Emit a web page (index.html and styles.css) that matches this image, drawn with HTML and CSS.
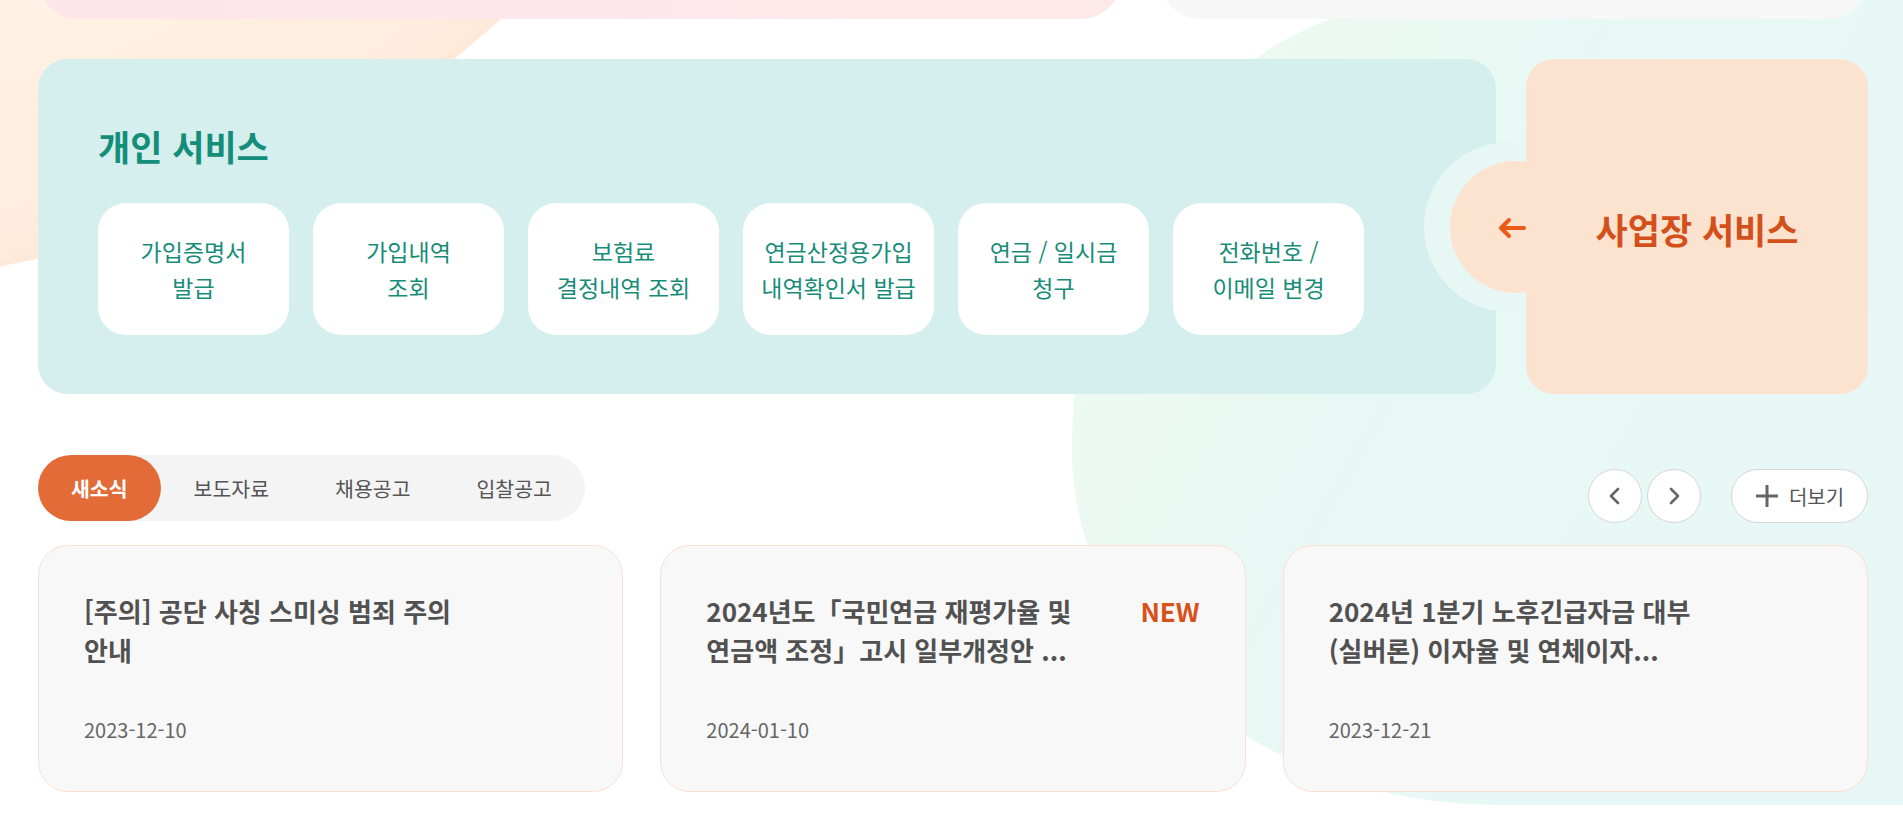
FILE: index.html
```html
<!DOCTYPE html>
<html lang="ko">
<head>
<meta charset="utf-8">
<title>국민연금 서비스</title>
<link rel="stylesheet" href="styles.css">
</head>
<body>
<div class="backdrop">
  <div class="blob-mint"></div>
</div>
<main class="page">
  <div class="top-row">
    <div class="top-card top-card-pink"></div>
    <div class="top-card top-card-gray"></div>
  </div>

  <section class="services">
    <div class="personal">
      <h2 class="personal-title">개인 서비스</h2>
      <ul class="svc-list">
        <li><a class="svc-btn" href="#">가입증명서<br>발급</a></li>
        <li><a class="svc-btn" href="#">가입내역<br>조회</a></li>
        <li><a class="svc-btn" href="#">보험료<br>결정내역 조회</a></li>
        <li><a class="svc-btn" href="#">연금산정용가입<br>내역확인서 발급</a></li>
        <li><a class="svc-btn" href="#">연금 / 일시금<br>청구</a></li>
        <li><a class="svc-btn" href="#">전화번호 /<br>이메일 변경</a></li>
      </ul>
    </div>
    <div class="ring"></div>
    <a class="business" href="#">
      <svg class="business-arrow" width="30" height="22" viewBox="0 0 30 22" aria-hidden="true">
        <path d="M27 11H4M12 3L4 11L12 19" fill="none" stroke="#e85b1a" stroke-width="4" stroke-linecap="round" stroke-linejoin="round"/>
      </svg>
      <span class="business-title">사업장 서비스</span>
    </a>
  </section>

  <section class="news">
    <div class="news-head">
      <div class="tabs">
        <a class="tab tab-active" href="#">새소식</a>
        <a class="tab" href="#">보도자료</a>
        <a class="tab" href="#">채용공고</a>
        <a class="tab" href="#">입찰공고</a>
      </div>
      <div class="controls">
        <button class="circle-btn" type="button" aria-label="이전">
          <svg width="14" height="18" viewBox="0 0 14 18"><path d="M10 2L3 9L10 16" fill="none" stroke="#666" stroke-width="2.6" stroke-linecap="round" stroke-linejoin="round"/></svg>
        </button>
        <button class="circle-btn" type="button" aria-label="다음">
          <svg width="14" height="18" viewBox="0 0 14 18"><path d="M4 2L11 9L4 16" fill="none" stroke="#666" stroke-width="2.6" stroke-linecap="round" stroke-linejoin="round"/></svg>
        </button>
        <a class="more-btn" href="#">
          <svg width="24" height="24" viewBox="0 0 24 24"><path d="M12 1V23M1 12H23" fill="none" stroke="#666" stroke-width="3"/></svg>
          <span>더보기</span>
        </a>
      </div>
    </div>

    <div class="cards">
      <a class="card" href="#">
        <div class="card-top">
          <p class="card-title">[주의] 공단 사칭 스미싱 범죄 주의 안내</p>
        </div>
        <p class="card-date">2023-12-10</p>
      </a>
      <a class="card" href="#">
        <div class="card-top">
          <p class="card-title">2024년도「국민연금 재평가율 및 연금액 조정」고시 일부개정안 ...</p>
          <span class="card-new">NEW</span>
        </div>
        <p class="card-date">2024-01-10</p>
      </a>
      <a class="card" href="#">
        <div class="card-top">
          <p class="card-title">2024년 1분기 노후긴급자금 대부 (실버론) 이자율 및 연체이자...</p>
        </div>
        <p class="card-date">2023-12-21</p>
      </a>
    </div>
  </section>
</main>
</body>
</html>
```

FILE: styles.css
```css
* {
  box-sizing: border-box;
}

html, body {
  margin: 0;
  padding: 0;
}

body {
  position: relative;
  width: 1903px;
  height: 816px;
  overflow: hidden;
  background: #ffffff;
  font-family: "Noto Sans CJK KR", "Noto Sans", sans-serif;
  color: #555;
}

a {
  text-decoration: none;
  color: inherit;
}

/* decorative background */
.backdrop {
  position: absolute;
  inset: 0;
  z-index: 0;
  overflow: hidden;
  background: radial-gradient(circle 1014px at -181px -731px,
    #fff3e6 720px, #ffebdc 1000px, #ffe8d7 1013px, rgba(255, 255, 255, 0) 1014px);
}

.blob-mint {
  position: absolute;
  left: 1072px;
  top: 0;
  width: 831px;
  height: 805px;
  border-radius: 362px 0 0 428px / 450px 0 0 355px;
  background: linear-gradient(120deg, #eefaf0 12%, #e7f8f5 45%, #e6f7f6 100%);
}

.page {
  position: relative;
  z-index: 1;
  padding: 0 35px 0 38px;
}

/* top row (previous section, cut off) */
.top-row {
  display: flex;
  gap: 39px;
  margin-top: -61px;
  height: 80px;
}

.top-card {
  height: 80px;
  border-radius: 40px;
}

.top-card-pink {
  width: 1083px;
  background: linear-gradient(90deg, #fee5ea, #fee9ea);
}

.top-card-gray {
  flex: 1;
  background: #f7f7f7;
}

/* services */
.services {
  position: relative;
  display: flex;
  gap: 30px;
  margin-top: 40px;
  height: 335px;
}

.personal {
  flex: 1;
  background: #d4efed;
  border-radius: 30px;
  padding: 70px 60px 0;
}

.personal-title {
  margin: 0 0 40px;
  font-size: 35px;
  line-height: 34px;
  font-weight: 700;
  color: #148d79;
}

.svc-list {
  display: flex;
  gap: 24px;
  margin: 0;
  padding: 0;
  list-style: none;
}

.svc-btn {
  display: flex;
  align-items: center;
  justify-content: center;
  width: 191px;
  height: 132px;
  border-radius: 28px;
  background: #ffffff;
  text-align: center;
  font-size: 23px;
  line-height: 36px;
  color: #178c79;
}

.ring {
  position: absolute;
  z-index: 1;
  right: 274px;
  top: 50%;
  margin-top: -85px;
  width: 170px;
  height: 170px;
  border-radius: 50%;
  background: #e7f8f4;
}

.business {
  position: relative;
  z-index: 2;
  width: 342px;
  display: flex;
  align-items: center;
  justify-content: center;
  background: #fce3cf;
  border-radius: 28px;
}

.business::before {
  content: "";
  position: absolute;
  left: -76px;
  top: 50%;
  margin-top: -66px;
  width: 132px;
  height: 132px;
  border-radius: 50%;
  background: #fce3cf;
}

.business-arrow {
  position: absolute;
  left: -29px;
  top: 50%;
  margin-top: -10px;
}

.business-title {
  position: relative;
  font-size: 35px;
  font-weight: 700;
  color: #d4501b;
  margin-top: 4px;
}

/* news */
.news-head {
  display: flex;
  justify-content: space-between;
  align-items: flex-end;
  margin-top: 61px;
}

.tabs {
  display: flex;
  background: #f4f4f4;
  border-radius: 33px;
}

.tab {
  display: flex;
  align-items: center;
  height: 66px;
  padding: 0 33px;
  border-radius: 33px;
  font-size: 20.5px;
  color: #555;
}

.tab-active {
  background: #e26b37;
  color: #fff;
  font-weight: 700;
}

.controls {
  display: flex;
  align-items: center;
  gap: 5px;
  margin-bottom: -2px;
}

.circle-btn {
  display: flex;
  align-items: center;
  justify-content: center;
  width: 54px;
  height: 54px;
  padding: 0;
  border: 1px solid #d6d6d6;
  border-radius: 50%;
  background: #fff;
}

.more-btn {
  display: flex;
  align-items: center;
  justify-content: center;
  gap: 10px;
  margin-left: 25px;
  width: 137px;
  height: 54px;
  border: 1px solid #d6d6d6;
  border-radius: 27px;
  background: #fff;
  font-size: 20px;
  color: #555;
}

.cards {
  display: grid;
  grid-template-columns: repeat(3, 1fr);
  gap: 37px;
  margin-top: 24px;
}

.card {
  display: flex;
  flex-direction: column;
  height: 247px;
  padding: 45px 45px 0;
  border: 1px solid #fddfd0;
  border-radius: 30px;
  background: #f8f8f8;
}

.card-top {
  display: flex;
  justify-content: space-between;
  align-items: flex-start;
}

.card-title {
  width: 400px;
  margin: 0;
  font-size: 26px;
  line-height: 39px;
  height: 78px;
  font-weight: 700;
  word-break: keep-all;
  color: #515151;
}

.card-new {
  font-size: 26px;
  line-height: 39px;
  font-weight: 700;
  color: #d6521a;
}

.card-date {
  margin: 46px 0 0;
  font-size: 20px;
  line-height: 30px;
  color: #666;
}
```
